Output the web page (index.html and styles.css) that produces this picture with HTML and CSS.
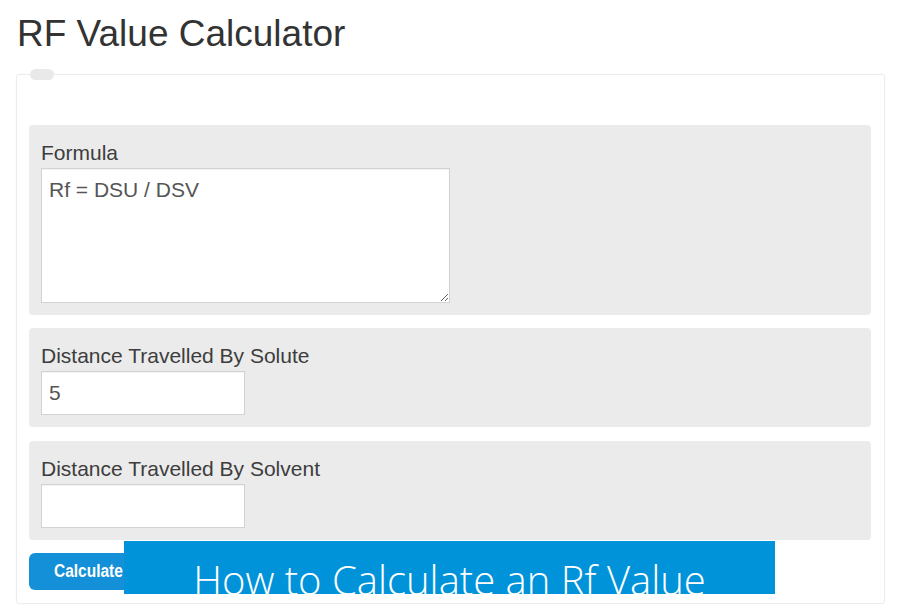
FILE: index.html
```html
<!DOCTYPE html>
<html>
<head>
<meta charset="utf-8">
<link rel="stylesheet" href="styles.css">
</head>
<body>
<h1 class="title">RF Value Calculator</h1>
<div class="card">
  <span class="legend"></span>
  <div class="fields">
    <div class="group">
      <label class="label">Formula</label>
      <textarea class="area">Rf = DSU / DSV</textarea>
    </div>
    <div class="group">
      <label class="label">Distance Travelled By Solute</label>
      <input class="input" type="text" value="5">
    </div>
    <div class="group group-last">
      <label class="label">Distance Travelled By Solvent</label>
      <input class="input" type="text" value="">
    </div>
    <div class="actions">
      <button class="btn"><span class="btn-text">Calculate</span></button>
    </div>
  </div>
  <div class="banner">How to Calculate an Rf Value</div>
</div>
</body>
</html>
```

FILE: styles.css
```css
html, body {
  margin: 0;
  padding: 0;
  background: #ffffff;
}
body {
  padding: 0 13px 0 16px;
  font-family: "Liberation Sans", Arial, sans-serif;
  color: #333;
  overflow: hidden;
  height: 608px;
  box-sizing: border-box;
}
.title {
  margin: 0;
  padding: 13px 0 0 1px;
  height: 74px;
  box-sizing: border-box;
  font-size: 37px;
  font-weight: normal;
  line-height: 42px;
  color: #333;
}
.card {
  position: relative;
  border: 1px solid #ececec;
  border-radius: 3px;
  box-shadow: 0 0 2px rgba(0,0,0,0.04);
  height: 530px;
  box-sizing: border-box;
  padding: 50px 13px 0 12px;
}
.legend {
  position: absolute;
  left: 13px;
  top: -6px;
  width: 24px;
  height: 11px;
  border-radius: 6px;
  background: #e9e9e9;
}
.fields {
  display: flex;
  flex-direction: column;
  gap: 13px;
}
.group {
  background: #ebebeb;
  border-radius: 4px;
  padding: 15px 12px 12px 12px;
  display: flex;
  flex-direction: column;
  align-items: flex-start;
}
.group-last {
  margin-top: 1px;
}
.label {
  font-size: 21px;
  line-height: 25px;
  color: #3d3d3d;
  margin-bottom: 3px;
}
.area, .input {
  font-family: "Liberation Sans", Arial, sans-serif;
  font-size: 21px;
  color: #555;
  background: #fff;
  border: 1px solid #d2d2d2;
  box-shadow: inset 0 1px 1px rgba(0,0,0,0.05);
  box-sizing: border-box;
  margin: 0;
  outline: none;
}
.area {
  width: 409px;
  height: 135px;
  padding: 10px 7px;
  line-height: 22px;
  resize: both;
}
.input {
  width: 204px;
  height: 44px;
  padding: 0 7px;
}
.actions {
  display: flex;
}
.btn {
  background: #1490d8;
  color: #fff;
  border: none;
  border-radius: 6px;
  height: 37px;
  width: 120px;
  padding: 0 0 0 25px;
  text-align: left;
  font-family: "Liberation Sans", Arial, sans-serif;
  font-weight: bold;
  font-size: 18px;
}
.btn-text {
  display: inline-block;
  transform: scaleX(0.86);
  transform-origin: left center;
}
.banner {
  position: absolute;
  left: 107px;
  top: 466px;
  width: 651px;
  height: 53px;
  background: #0093d9;
  color: #fff;
  font-family: "Open Sans", sans-serif;
  font-weight: 300;
  font-size: 40px;
  line-height: 54px;
  padding-top: 12px;
  box-sizing: border-box;
  text-align: center;
  overflow: hidden;
  white-space: nowrap;
}
```
